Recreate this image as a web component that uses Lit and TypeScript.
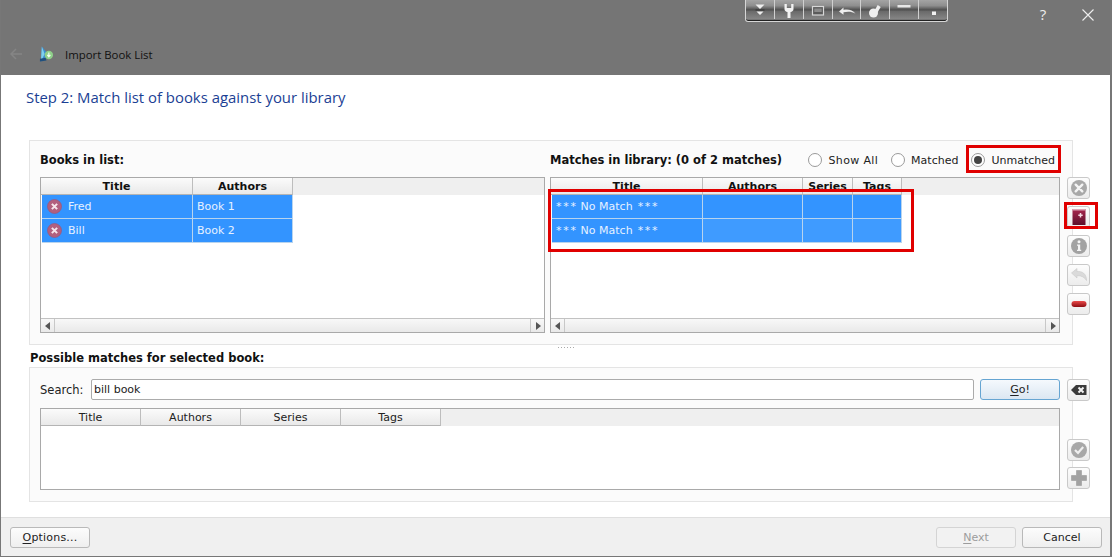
import { LitElement, html, css, svg } from "lit";
import { customElement } from "lit/decorators.js";

type Col = { label: string; w: number };

const circleX = svg`<circle cx="10" cy="10" r="8" fill="#a8a8a8"/><path d="M6.700 6.700l6.600 6.600M13.300 6.700l-6.600 6.600" stroke="#f4f4f4" stroke-width="2.400" stroke-linecap="round"/>`;
const bookPlus = svg`<defs><linearGradient id="bk" x1="0" y1="0" x2="0" y2="1"><stop offset="0" stop-color="#a8264e"/><stop offset="1" stop-color="#5c0f2a"/></linearGradient></defs><rect x="3.500" y="2" width="13" height="16" fill="url(#bk)"/><rect x="3.500" y="2" width="13" height="1.500" fill="#d9a6b6"/><path d="M11.500 6v4.400M9.300 8.200h4.400" stroke="#f4dbe3" stroke-width="1.500"/>`;
const info = svg`<circle cx="10" cy="10" r="8" fill="#a2a2a2"/><circle cx="10" cy="5.800" r="1.500" fill="#f4f4f4"/><path d="M8 8.500h3.200v5.200h1v1.300H8v-1.300h1V9.800H8z" fill="#f4f4f4"/>`;
const undo = svg`<path d="M2.500 8L8 3.500v3c5-.5 9.500 2 9.500 9-1.800-3.200-5-5-9.500-4.800V13z" fill="#dadada" stroke="#cacaca" stroke-width=".6"/>`;
const minus = svg`<defs><linearGradient id="mn" x1="0" y1="0" x2="0" y2="1"><stop offset="0" stop-color="#ea4b4b"/><stop offset="1" stop-color="#8e0c12"/></linearGradient></defs><rect x="2.500" y="7" width="15" height="6" rx="3" fill="url(#mn)"/>`;
const clearIcon = svg`<path d="M2 10L7 5h10.500v10H7z" fill="#3a3a3a"/><path d="M9.500 7.500l5 5M14.500 7.500l-5 5" stroke="#f2f2f2" stroke-width="2"/>`;
const check = svg`<circle cx="10" cy="10" r="8" fill="#a8a8a8"/><path d="M6 10l3 3 5.200-6" fill="none" stroke="#efefef" stroke-width="2.200"/>`;
const plus = svg`<path d="M7.500 2.500h5v5h5v5h-5v5h-5v-5h-5v-5h5z" fill="#a2a2a2" stroke="#9a9a9a" stroke-width=".6" stroke-linejoin="round"/>`;

const toolbarIcons = [
  svg`<path d="M4.500 2.500h9L9 7zM5.500 9.500h7L9 13z" fill="#eee"/><path d="M4.500 8h9" stroke="#333" stroke-width="1"/>`,
  svg`<path d="M4.500 2h2.300v4h4.400V2h2.300v5c0 1.700-1.300 2.800-3 3.100V16H7.500v-5.900c-1.700-.3-3-1.400-3-3.100z" fill="#f2f2f2"/>`,
  svg`<rect x="3.500" y="4.500" width="11" height="8.500" fill="#5a5a5a" stroke="#d8d8d8" stroke-width="1.200"/><rect x="5.300" y="6.500" width="7.400" height="3.500" fill="#8b8b8b"/>`,
  svg`<path d="M1 9.500L5.500 5.500v2.300c4.500-1 9-.2 12 3.900-3.500-2.200-7.500-2.400-12-1.500v2.500z" fill="#eee"/>`,
  svg`<circle cx="7.500" cy="11" r="4.500" fill="#eee"/><path d="M8.500 8.500l3.200-5.500 3 2-3.200 5.500z" fill="#eee"/>`,
  svg`<rect x="2.500" y="3" width="13" height="2.500" fill="#e8e8e8"/>`,
  svg`<rect x="8" y="9.500" width="4" height="3.500" fill="#f2f2f2"/>`,
];

@customElement("app-root")
export class AppRoot extends LitElement {
  static styles = css`
    :host {
      display: block;
      position: relative;
      width: 1112px;
      height: 557px;
      overflow: hidden;
      font-family: "DejaVu Sans", Verdana, sans-serif;
      font-size: 11px;
      color: #222;
    }
    * { box-sizing: border-box; }
    .window {
      height: 557px;
      display: flex;
      flex-direction: column;
      border-left: 1px solid #777;
      border-right: 2px solid #777;
      border-bottom: 1px solid #777;
      background: #fff;
    }
    .titlebar {
      height: 75px;
      flex: none;
      background: #757575;
      display: flex;
      align-items: flex-end;
      padding: 0 0 12px 8px;
      font-family: "Open Sans", sans-serif;
      font-size: 11.4px;
      color: #111;
    }
    .titlebar-row { display: flex; align-items: center; height: 18px; }
    .back { width: 14px; height: 14px; margin-right: 17px; }
    .app-icon { width: 15px; height: 18px; margin-right: 11px; margin-left: -1px; }

    .floatbar {
      position: absolute;
      left: 745px;
      top: 0;
      width: 203px;
      height: 22px;
      display: flex;
      border: 1px solid #d6d6d6;
      border-top: none;
      border-radius: 0 0 3px 3px;
      box-shadow: inset 0 -1px 0 #222;
      padding-bottom: 2px;
    }
    .floatbar .seg {
      flex: 1;
      display: flex;
      align-items: center;
      justify-content: center;
      padding-top: 2px;
      border-right: 1px solid #d0d0d0;
      background: linear-gradient(#a4a4a4 0, #8e8e8e 30%, #4f4f4f 52%, #6b6b6b 60%, #858585 100%);
    }
    .floatbar .seg:last-child { border-right: none; }
    .floatbar svg { width: 18px; height: 18px; }
    .winbtn {
      position: absolute;
      top: 5px;
      height: 20px;
      display: flex;
      align-items: center;
      justify-content: center;
      color: #eee;
      font-family: "Open Sans", sans-serif;
      font-size: 15px;
    }
    .help { left: 1037px; width: 12px; top: 4px; }
    .close { left: 1081px; width: 14px; }
    .close svg { width: 14px; height: 14px; }

    .step {
      height: 65px;
      flex: none;
      padding: 12px 0 0 25px;
      font-family: "Open Sans", sans-serif;
      font-size: 14.9px;
      line-height: 20px;
      color: #1b3f94;
    }
    .panel {
      margin-left: 28px;
      width: 1044px;
      flex: none;
      background: #fbfbfb;
      border: 1px solid #e4e4e4;
    }
    .panel-top {
      height: 205px;
      padding-left: 10px;
      display: grid;
      grid-template-columns: 505px 510px 23px;
      grid-template-rows: 36px 156px;
      column-gap: 5px;
    }
    .panel-top .side { margin-left: 2px; }
    .head { display: flex; align-items: center; font-weight: 700; font-size: 11.5px; height: 36px; padding-top: 2px; color: #111; }
    .radios { display: flex; margin-left: auto; font-weight: 400; font-size: 11px; padding-right: 5px; gap: 13px; color: #222; }
    .radio { display: flex; align-items: center; gap: 6px; }
    .radio.wide { letter-spacing: .35px; }
    .dot {
      width: 14px;
      height: 14px;
      border-radius: 50%;
      border: 1px solid #9a9a9a;
      background: #fff;
      display: flex;
      align-items: center;
      justify-content: center;
    }
    .dot i { width: 8px; height: 8px; border-radius: 50%; background: #444; display: block; }

    .side { display: flex; flex-direction: column; gap: 7px; width: 23px; }
    .icon-btn {
      width: 23px;
      height: 22px;
      flex: none;
      border: 1px solid #c9c9c9;
      border-radius: 3px;
      background: linear-gradient(#fdfdfd, #ececec);
      display: flex;
      align-items: center;
      justify-content: center;
    }
    .icon-btn svg { width: 20px; height: 20px; display: block; }

    .table {
      height: 100%;
      border: 1px solid #a9a9a9;
      background: #fff;
      display: flex;
      flex-direction: column;
      overflow: hidden;
    }
    .thead { display: flex; height: 17px; flex: none; background: #efefef; }
    .th {
      flex: none;
      text-align: center;
      line-height: 17px;
      border-right: 1px solid #bdbdbd;
      border-bottom: 1px solid #b4b4b4;
      background: linear-gradient(#fbfbfb, #e9e9e9);
    }
    .bold .th { font-weight: 700; color: #111; }
    .tbody { flex: 1; padding-left: 1px; min-height: 0; }
    .tr { display: flex; height: 24px; }
    .td {
      flex: none;
      background: #3394ff;
      color: #e6f1ff;
      line-height: 23px;
      padding-left: 4px;
      border-right: 1px solid #b8d4ee;
      border-bottom: 1px solid #b8d4ee;
      white-space: nowrap;
      display: flex;
      align-items: center;
    }
    .td.hover { background: #3f9bff; }
    .td svg { width: 15px; height: 15px; margin: 0 6px 1px 0; flex: none; }
    .td.has-icon { padding-left: 5px; }
    .stars { letter-spacing: 1.7px; margin-right: 3px; }
    .stars.end { margin: 0 0 0 5px; }
    .hscroll {
      height: 14px;
      flex: none;
      display: flex;
      justify-content: space-between;
      border-top: 1px solid #c2c2c2;
      background: linear-gradient(#f8f8f8, #e9e9e9);
    }
    .hscroll span {
      width: 14px;
      display: flex;
      align-items: center;
      justify-content: center;
      border-right: 1px solid #c8c8c8;
    }
    .hscroll span:last-child { border-right: none; border-left: 1px solid #c8c8c8; }
    .hscroll svg { width: 6px; height: 8px; }

    .splitter { height: 5px; flex: none; display: flex; justify-content: center; align-items: center; }
    .splitter b {
      display: block;
      width: 16px;
      height: 1px;
      margin-left: 20px;
      background: repeating-linear-gradient(90deg, #aaa 0 1px, transparent 1px 3px);
    }
    .section {
      height: 17px;
      flex: none;
      padding-left: 29px;
      font-weight: 700;
      font-size: 11.5px;
      line-height: 17px;
      color: #111;
    }
    .panel-bottom {
      height: 135px;
      padding: 11px 0 0 10px;
      display: grid;
      grid-template-columns: 1020px 23px;
      grid-template-rows: 21px 82px;
      column-gap: 7px;
      row-gap: 8px;
      align-items: stretch;
    }
    .search { display: flex; align-items: center; }
    .search label { width: 51px; flex: none; font-size: 11.5px; padding-top: 1px; }
    .input {
      width: 883px;
      height: 21px;
      border: 1px solid #ababab;
      border-radius: 2px;
      background: #fff;
      line-height: 20px;
      padding-left: 2px;
      margin-right: 6px;
    }
    .btn {
      width: 80px;
      height: 21px;
      flex: none;
      border: 1px solid #b9b9b9;
      border-radius: 3px;
      background: linear-gradient(#fcfcfc, #efefef);
      text-align: center;
      line-height: 19px;
      color: #222;
    }
    .btn u { text-underline-offset: 2px; }
    .btn.go { border-color: #66a5d2; background: linear-gradient(#f5f9fd, #dbe7f2); }
    .btn.opts { letter-spacing: .2px; }
    .btn.disabled { color: #9c9c9c; background: #f2f2f2; border-color: #d4d4d4; }
    .bottom-side { justify-content: flex-end; gap: 6px; align-self: stretch; height: 82px; padding-bottom: 1px; }

    .spacer { flex: 1; }
    .footer {
      height: 39px;
      flex: none;
      background: #f0f0f0;
      border-top: 1px solid #dfdfdf;
      display: flex;
      align-items: center;
      padding: 0 8px 0 9px;
      gap: 6px;
    }
    .footer .grow { flex: 1; }

    .mark { position: absolute; border: 3px solid #e00000; pointer-events: none; }
    .m1 { left: 966px; top: 145px; width: 95px; height: 28px; }
    .m2 { left: 1064px; top: 202px; width: 34px; height: 27px; }
    .m3 { left: 548px; top: 189px; width: 366px; height: 63px; }
  `;

  private table(cols: Col[], rows: unknown[][], bold: boolean, scroll: boolean) {
    return html`<div class="table">
      <div class="thead ${bold ? "bold" : ""}">
        ${cols.map((c) => html`<div class="th" style="width:${c.w}px">${c.label}</div>`)}
      </div>
      <div class="tbody">
        ${rows.map(
          (r, ri) => html`<div class="tr">
            ${r.map(
              (cell, i) => html`<div
                class="td ${i === 0 && cols.length === 2 ? "has-icon" : ""} ${ri === 1 && i > 0 && cols.length > 2 ? "hover" : ""}"
                style="width:${i === 0 ? cols[0].w - 1 : cols[i].w}px"
              >${cell}</div>`
            )}
          </div>`
        )}
      </div>
      ${scroll
        ? html`<div class="hscroll">
            <span><svg viewBox="0 0 6 8"><path d="M5 0v8L0 4z" fill="#555"/></svg></span>
            <span><svg viewBox="0 0 6 8"><path d="M1 0v8l5-4z" fill="#555"/></svg></span>
          </div>`
        : ""}
    </div>`;
  }

  private rowIcon(name: string) {
    return html`<svg viewBox="0 0 16 16"><circle cx="8" cy="8" r="7.500" fill="#b2607f" stroke="#a05070" stroke-width=".6"/><path d="M5.200 5.200l5.600 5.600M10.800 5.200l-5.600 5.600" stroke="#f6e6ec" stroke-width="2.200"/></svg>${name}`;
  }

  private iconBtn(content: unknown) {
    return html`<div class="icon-btn"><svg viewBox="0 0 20 20">${content}</svg></div>`;
  }

  private radio(label: string, on = false, wide = false) {
    return html`<div class="radio ${wide ? "wide" : ""}"><span class="dot">${on ? html`<i></i>` : ""}</span>${label}</div>`;
  }

  render() {
    const listCols = [{ label: "Title", w: 152 }, { label: "Authors", w: 100 }];
    const matchCols = [
      { label: "Title", w: 152 },
      { label: "Authors", w: 100 },
      { label: "Series", w: 50 },
      { label: "Tags", w: 49 },
    ];
    const possibleCols = [
      { label: "Title", w: 100 },
      { label: "Authors", w: 100 },
      { label: "Series", w: 100 },
      { label: "Tags", w: 100 },
    ];
    const noMatch = html`<span class="stars">***</span>No Match<span class="stars end">***</span>`;
    return html`
      <div class="window">
        <div class="titlebar">
          <div class="titlebar-row">
            <svg class="back" viewBox="0 0 14 14"><path d="M13 7H2M7 2L2 7l5 5" fill="none" stroke="#858585" stroke-width="1.500"/></svg>
            <svg class="app-icon" viewBox="0 0 16 18">
              <path d="M3 1l5 6-1 7-5 3z" fill="#3d8fd0"/>
              <path d="M3 1l3 8-4 8z" fill="#7fd0ee"/>
              <path d="M1 14l6-1 1 3-7 1z" fill="#20507e"/>
              <circle cx="10.500" cy="10" r="4.500" fill="#8fd08a"/>
              <path d="M10.500 7.500v4M8.800 10l1.700 2 1.700-2" fill="none" stroke="#f4fff2" stroke-width="1.200"/>
            </svg>
            <span>Import Book List</span>
          </div>
        </div>
        <div class="step">Step 2: Match list of books against your library</div>
        <div class="panel panel-top">
          <div class="head">Books in list:</div>
          <div class="head">
            Matches in library: (0 of 2 matches)
            <div class="radios">
              ${this.radio("Show All", false, true)}${this.radio("Matched")}${this.radio("Unmatched", true)}
            </div>
          </div>
          <div></div>
          ${this.table(listCols, [[this.rowIcon("Fred"), "Book 1"], [this.rowIcon("Bill"), "Book 2"]], true, true)}
          ${this.table(matchCols, [[noMatch, "", "", ""], [noMatch, "", "", ""]], true, true)}
          <div class="side">
            ${this.iconBtn(circleX)}${this.iconBtn(bookPlus)}${this.iconBtn(info)}${this.iconBtn(undo)}${this.iconBtn(minus)}
          </div>
        </div>
        <div class="splitter"><b></b></div>
        <div class="section">Possible matches for selected book:</div>
        <div class="panel panel-bottom">
          <div class="search">
            <label>Search:</label>
            <div class="input">bill book</div>
            <div class="btn go"><u>G</u>o!</div>
          </div>
          ${this.iconBtn(clearIcon)}
          ${this.table(possibleCols, [], false, false)}
          <div class="side bottom-side">${this.iconBtn(check)}${this.iconBtn(plus)}</div>
        </div>
        <div class="spacer"></div>
        <div class="footer">
          <div class="btn opts"><u>O</u>ptions...</div>
          <div class="grow"></div>
          <div class="btn disabled"><u>N</u>ext</div>
          <div class="btn">Cancel</div>
        </div>
      </div>
      <div class="floatbar">
        ${toolbarIcons.map((i) => html`<div class="seg"><svg viewBox="0 0 18 18">${i}</svg></div>`)}
      </div>
      <div class="winbtn help">?</div>
      <div class="winbtn close"><svg viewBox="0 0 14 14"><path d="M1.500 1.500l11 11M12.500 1.500l-11 11" stroke="#eee" stroke-width="1.100"/></svg></div>
      <div class="mark m1"></div>
      <div class="mark m2"></div>
      <div class="mark m3"></div>
    `;
  }
}
